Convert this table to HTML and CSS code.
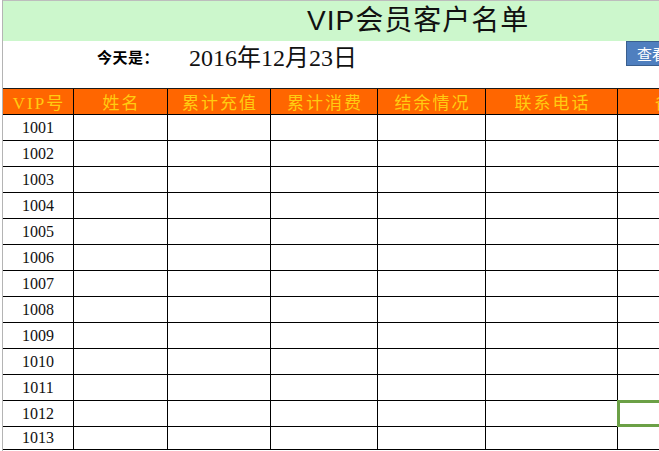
FILE: index.html
```html
<!DOCTYPE html>
<html lang="zh-CN">
<head>
<meta charset="utf-8">
<title>VIP会员客户名单</title>
<link rel="stylesheet" href="styles.css">
</head>
<body>
<div class="sheet">
  <div class="title-band"><h1 class="title">VIP会员客户名单</h1></div>
  <div class="date-row">
    <span></span>
    <span class="today-label">今天是：</span>
    <span class="today-date">2016年12月23日</span>
    <button class="view-btn">查看</button>
  </div>
  <div class="grid">
    <div class="hcell">VIP号</div><div class="hcell">姓名</div><div class="hcell">累计充值</div><div class="hcell">累计消费</div><div class="hcell">结余情况</div><div class="hcell">联系电话</div><div class="hcell">备注</div>
    <div class="cell id">1001</div><div class="cell"></div><div class="cell"></div><div class="cell"></div><div class="cell"></div><div class="cell"></div><div class="cell"></div>
    <div class="cell id">1002</div><div class="cell"></div><div class="cell"></div><div class="cell"></div><div class="cell"></div><div class="cell"></div><div class="cell"></div>
    <div class="cell id">1003</div><div class="cell"></div><div class="cell"></div><div class="cell"></div><div class="cell"></div><div class="cell"></div><div class="cell"></div>
    <div class="cell id">1004</div><div class="cell"></div><div class="cell"></div><div class="cell"></div><div class="cell"></div><div class="cell"></div><div class="cell"></div>
    <div class="cell id">1005</div><div class="cell"></div><div class="cell"></div><div class="cell"></div><div class="cell"></div><div class="cell"></div><div class="cell"></div>
    <div class="cell id">1006</div><div class="cell"></div><div class="cell"></div><div class="cell"></div><div class="cell"></div><div class="cell"></div><div class="cell"></div>
    <div class="cell id">1007</div><div class="cell"></div><div class="cell"></div><div class="cell"></div><div class="cell"></div><div class="cell"></div><div class="cell"></div>
    <div class="cell id">1008</div><div class="cell"></div><div class="cell"></div><div class="cell"></div><div class="cell"></div><div class="cell"></div><div class="cell"></div>
    <div class="cell id">1009</div><div class="cell"></div><div class="cell"></div><div class="cell"></div><div class="cell"></div><div class="cell"></div><div class="cell"></div>
    <div class="cell id">1010</div><div class="cell"></div><div class="cell"></div><div class="cell"></div><div class="cell"></div><div class="cell"></div><div class="cell"></div>
    <div class="cell id">1011</div><div class="cell"></div><div class="cell"></div><div class="cell"></div><div class="cell"></div><div class="cell"></div><div class="cell"></div>
    <div class="cell id">1012</div><div class="cell"></div><div class="cell"></div><div class="cell"></div><div class="cell"></div><div class="cell"></div><div class="cell sel"></div>
    <div class="cell id">1013</div><div class="cell"></div><div class="cell"></div><div class="cell"></div><div class="cell"></div><div class="cell"></div><div class="cell"></div>
  </div>
</div>
</body>
</html>
```

FILE: styles.css
```css
html, body {
  margin: 0;
  padding: 0;
  width: 659px;
  height: 451px;
  overflow: hidden;
  background: #ffffff;
}

.sheet {
  margin-left: 2px;
  border-left: 1px solid #b4b4b4;
  width: 760px;
  height: 451px;
}

.title-band {
  height: 40px;
  border-top: 1px solid #bdbdbd;
  background: #ccf7cc;
  padding-left: 304px;
}

.title {
  margin: 0;
  font-family: "Liberation Sans", "Noto Sans CJK SC", sans-serif;
  font-weight: normal;
  font-size: 28px;
  line-height: 40px;
  letter-spacing: 1px;
  color: #111111;
}

.date-row {
  height: 47px;
  display: grid;
  grid-template-columns: 94px 92px 437px 70px;
  align-items: start;
}

.today-label {
  margin-top: 5px;
  font-family: "Liberation Serif", "Noto Sans CJK SC", serif;
  font-weight: bold;
  font-size: 15px;
  line-height: 24px;
  letter-spacing: 0.5px;
  color: #000000;
}

.today-date {
  margin-top: 5px;
  font-family: "Liberation Serif", "Noto Sans CJK SC", serif;
  font-size: 24px;
  line-height: 24px;
  color: #111111;
}

.view-btn {
  height: 25px;
  width: 70px;
  margin: 0;
  padding: 0 0 0 10px;
  text-align: left;
  background: #4f7fbf;
  border: 1px solid #3a5f8e;
  color: #ffffff;
  font-family: "Noto Sans CJK SC", sans-serif;
  font-size: 15px;
  line-height: 22px;
}

.grid {
  display: grid;
  grid-template-columns: 70px 93px 102px 106px 107px 131px 110px;
  grid-template-rows: repeat(13, 25px) 22px;
  gap: 1px;
  background: #000000;
  border-top: 1px solid #1a1a1a;
  border-bottom: 1px solid #000000;
  width: 725px;
}

.hcell {
  background: #ff6600;
  color: #ffcc11;
  font-family: "Liberation Serif", "Noto Sans CJK SC", serif;
  font-size: 17px;
  letter-spacing: 2px;
  padding-left: 2px;
  display: flex;
  align-items: center;
  justify-content: center;
}

.cell {
  background: #ffffff;
}

.id {
  display: flex;
  align-items: center;
  justify-content: center;
  font-family: "Liberation Serif", serif;
  font-size: 16px;
  color: #111111;
}

.sel {
  outline: 3px solid #6ba046;
  outline-offset: -2px;
}
```
